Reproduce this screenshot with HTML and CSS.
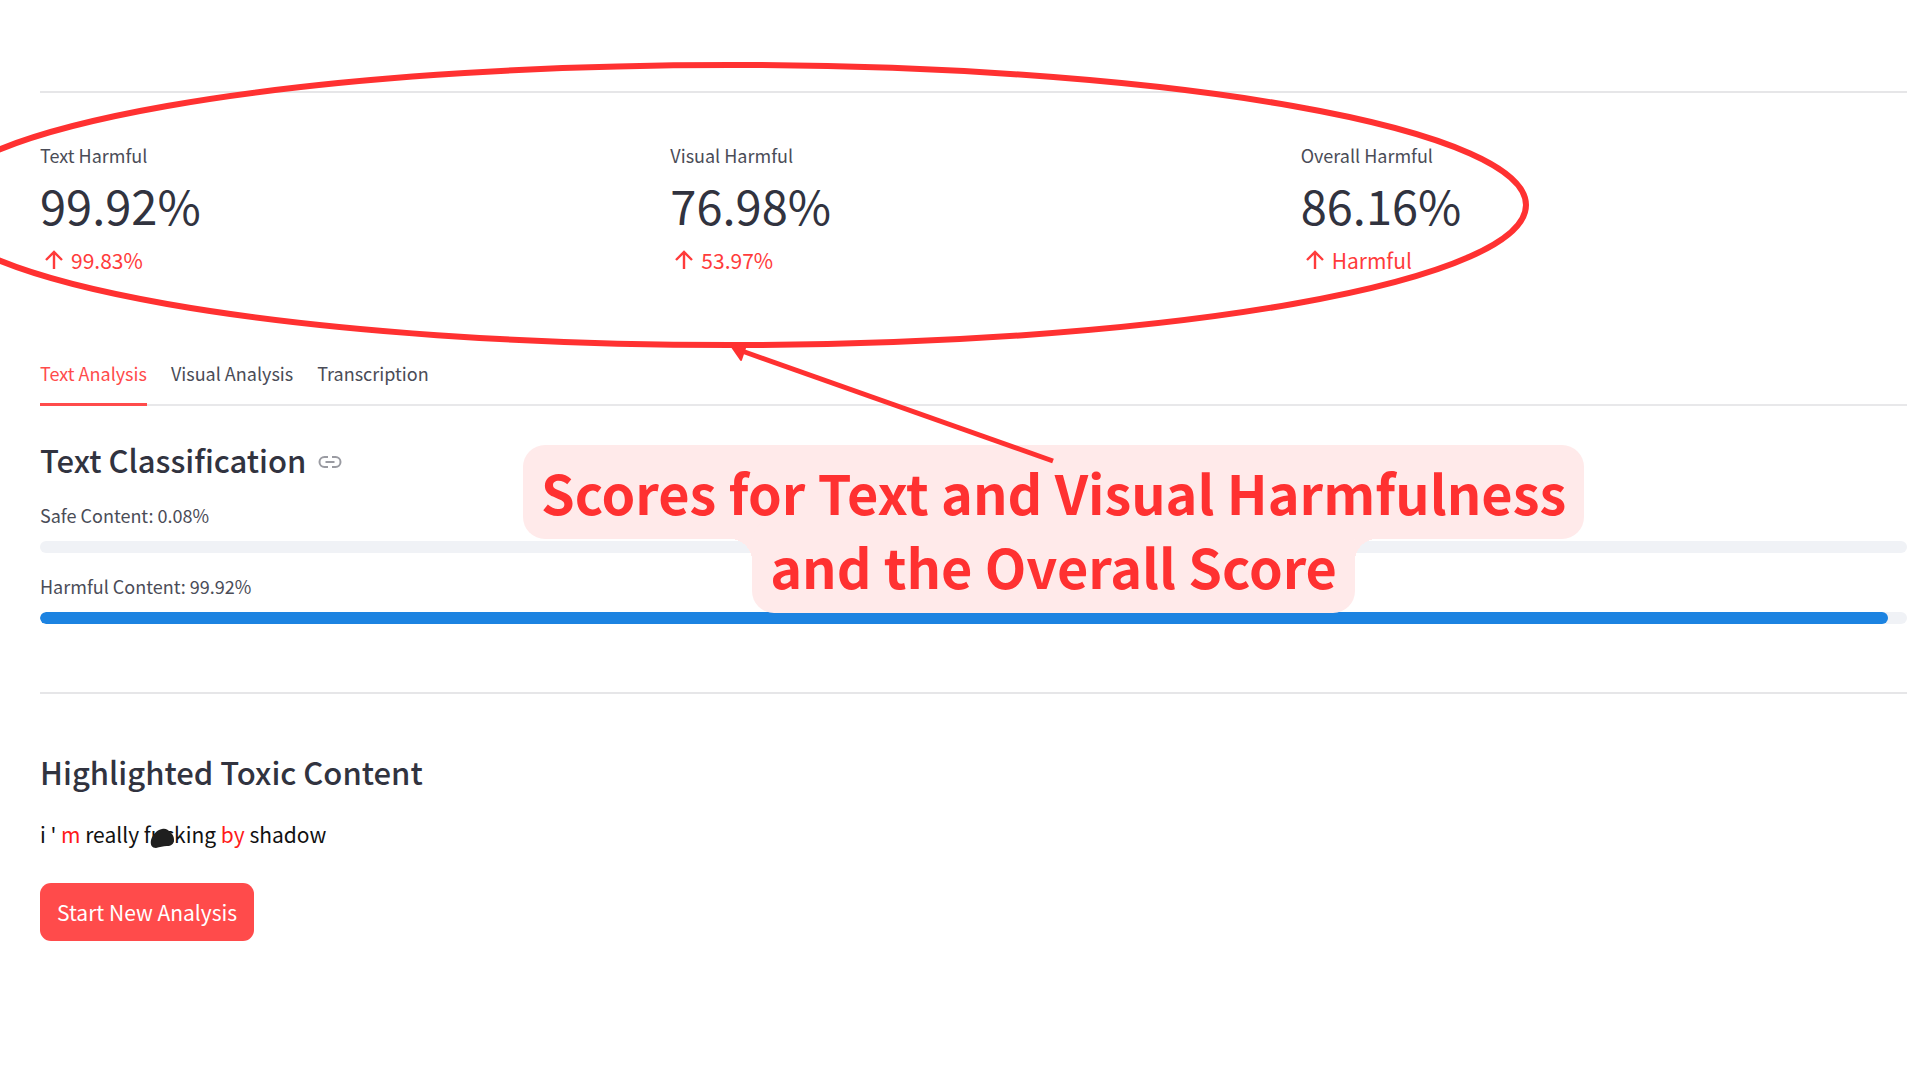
FILE: index.html
```html
<!DOCTYPE html>
<html lang="en">
<head>
<meta charset="utf-8">
<meta name="viewport" content="width=device-width, initial-scale=1">
<title>Content Analysis</title>
<link rel="stylesheet" href="styles.css">
</head>
<body>
<main class="page">
  <hr class="divider">
  <section class="metrics" aria-label="Scores">
    <div class="metric">
      <div class="metric-label">Text Harmful</div>
      <div class="metric-value">99.92%</div>
      <div class="metric-delta"><svg class="arrow-up" viewBox="0 0 20 20" aria-hidden="true"><path d="M10 19V2M2 10l8-8 8 8"/></svg><span>99.83%</span></div>
    </div>
    <div class="metric">
      <div class="metric-label">Visual Harmful</div>
      <div class="metric-value">76.98%</div>
      <div class="metric-delta"><svg class="arrow-up" viewBox="0 0 20 20" aria-hidden="true"><path d="M10 19V2M2 10l8-8 8 8"/></svg><span>53.97%</span></div>
    </div>
    <div class="metric">
      <div class="metric-label">Overall Harmful</div>
      <div class="metric-value">86.16%</div>
      <div class="metric-delta"><svg class="arrow-up" viewBox="0 0 20 20" aria-hidden="true"><path d="M10 19V2M2 10l8-8 8 8"/></svg><span>Harmful</span></div>
    </div>
  </section>

  <div class="tabs" role="tablist">
    <button class="tab tab-active" type="button" role="tab" aria-selected="true">Text Analysis</button>
    <button class="tab" type="button" role="tab" aria-selected="false">Visual Analysis</button>
    <button class="tab" type="button" role="tab" aria-selected="false">Transcription</button>
  </div>

  <section class="classification">
    <h2 class="heading" id="text-classification">Text Classification
      <a class="anchor" href="#text-classification" aria-label="Link to heading"><svg viewBox="0 0 24 14" aria-hidden="true"><path d="M10 2H6.500a5 5 0 0 0 0 10H10M14 2h3.500a5 5 0 0 1 0 10H14M7.500 7h9"/></svg></a>
    </h2>
    <label class="bar-label" for="safe">Safe Content: 0.08%</label>
    <progress class="bar" id="safe" max="100" value="0"></progress>
    <label class="bar-label" for="harmful">Harmful Content: 99.92%</label>
    <progress class="bar" id="harmful" max="100" value="99"></progress>
  </section>

  <hr class="divider">

  <section class="highlighted">
    <h2 class="heading">Highlighted Toxic Content</h2>
    <p class="transcript">i ' <span class="toxic">m</span> really <span class="censored">fucking<svg class="blot" viewBox="0 0 24 20" aria-hidden="true"><path d="M1 12C3 6 7 2 12 1c4-1 6 1 8 3 3 2 4 5 4 8 0 4-3 6-7 6-4 0-7 1-11 2-4 0-6-3-5-8z"/></svg></span> <span class="toxic">by</span> shadow</p>
    <button class="primary" type="button">Start New Analysis</button>
  </section>

  <p class="callout">
    <span class="callout-line">Scores for Text and Visual Harmfulness</span>
    <span class="callout-line callout-second">and the Overall Score</span>
  </p>
  <svg class="marks" viewBox="0 0 1600 500" aria-hidden="true">
    <ellipse cx="730" cy="205" rx="796" ry="140"/>
    <path d="M742 351L1053 461"/>
    <path class="head" d="M732 347l9 13 5-15z"/>
  </svg>
</main>
</body>
</html>
```
FILE: styles.css
```css
* { box-sizing: border-box; }

body {
  margin: 0;
  background: #fff;
  color: #31333f;
  font-family: "Noto Sans CJK SC", "Noto Sans", sans-serif;
  font-size: 18px;
  line-height: 24px;
}

.page {
  position: relative;
  min-height: 100vh;
  padding: 91px 13px 40px 40px;
  overflow: hidden;
}

.divider {
  height: 2px;
  margin: 0;
  border: 0;
  background: #e6e6e8;
}

.metrics {
  display: grid;
  grid-template-columns: repeat(3, 1fr);
  gap: 24px;
  padding-top: 50px;
}

.metric-value {
  font-size: 47px;
  font-weight: 400;
  line-height: 76px;
}

.metric-label { color: #4a4c57; }

.metric-delta {
  display: flex;
  align-items: center;
  gap: 7px;
  padding-left: 4px;
  color: #ff3b3b;
  font-size: 21px;
  line-height: 34px;
}

.arrow-up {
  width: 20px;
  height: 20px;
  fill: none;
  stroke: currentColor;
  stroke-width: 2.400;
}

.tabs {
  display: flex;
  gap: 24px;
  margin-top: 72px;
  box-shadow: inset 0 -2px #e8e8ea;
}

.tab {
  height: 57px;
  padding: 0 0 6px;
  border: 0;
  border-bottom: 3px solid transparent;
  background: none;
  color: #4a4c57;
  font: inherit;
}

.tab-active {
  border-color: #ff4b4b;
  color: #ff4b4b;
}

.classification { padding: 32px 0 68px; }

.heading {
  display: flex;
  align-items: center;
  gap: 12px;
  margin: 0;
  font-size: 31px;
  font-weight: 500;
  line-height: 44px;
}

.anchor {
  display: flex;
  padding-top: 4px;
}

.anchor svg {
  width: 24px;
  height: 14px;
  fill: none;
  stroke: #9a9ba2;
  stroke-width: 2;
}

.bar-label {
  display: block;
  margin: 21px 0 14px;
  color: #4a4c57;
}

.bar {
  display: block;
  width: 100%;
  height: 12px;
  border: 0;
  border-radius: 6px;
  background: #f0f2f6;
  overflow: hidden;
  appearance: none;
}

.bar::-webkit-progress-bar { background: #f0f2f6; }

.bar::-webkit-progress-value {
  border-radius: 6px;
  background: #1c83e1;
}

.highlighted { padding-top: 56px; }

.transcript {
  margin: 24px 0 33px;
  color: #111;
  font-size: 21px;
  line-height: 32px;
}

.toxic { color: #ff1a1a; }

.censored { position: relative; }

.blot {
  position: absolute;
  top: 9px;
  left: 6px;
  width: 24px;
  height: 20px;
  fill: #1f1f1f;
}

.primary {
  height: 58px;
  padding: 0 17px;
  border: 0;
  border-radius: 11px;
  background: #ff4b4b;
  color: #fff;
  font: inherit;
  font-size: 21px;
}

.callout {
  position: absolute;
  top: 445px;
  left: 523px;
  display: flex;
  flex-direction: column;
  align-items: center;
  margin: 0;
  color: #ff3131;
  font-size: 54px;
  font-weight: 700;
  line-height: 94px;
  white-space: nowrap;
}

.callout-line {
  padding: 0 18px;
  border-radius: 22px;
  background: #ffeaea;
}

.callout-second {
  position: relative;
  margin-top: -20px;
}

/* inner corners where the narrow line meets the wide one */
.callout-second::before,
.callout-second::after {
  content: "";
  position: absolute;
  top: 20px;
  width: 22px;
  height: 22px;
}

.callout-second::before {
  right: 100%;
  background: radial-gradient(circle at 0 100%, transparent 22px, #ffeaea 22px);
}

.callout-second::after {
  left: 100%;
  background: radial-gradient(circle at 100% 100%, transparent 22px, #ffeaea 22px);
}

.marks {
  position: absolute;
  top: 0;
  left: 0;
  width: 1600px;
  height: 500px;
  fill: none;
  stroke: #ff3131;
  stroke-width: 6;
  pointer-events: none;
}

.marks path { stroke-width: 5; }

.marks .head {
  fill: #ff3131;
  stroke-width: 2;
  stroke-linejoin: round;
}
```
